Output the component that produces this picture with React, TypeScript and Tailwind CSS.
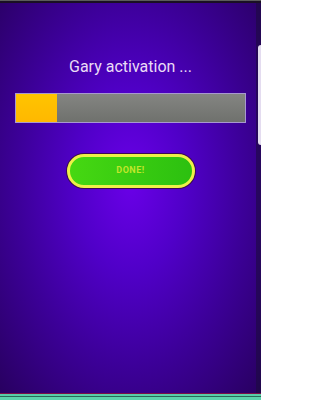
import React from 'react';

const App = () => {
  const progress = 41; // px of 229 inner width

  return (
    <div className="w-[261px] h-[400px] flex flex-col bg-[#12081c] overflow-hidden relative font-['Roboto',sans-serif]">
      {/* top status edge */}
      <div className="h-[1px] bg-[#5c5c5c]" />
      <div className="h-[2px] bg-[#1a1024]" />

      {/* main screen */}
      <div className="flex-1 flex flex-col items-center bg-[radial-gradient(ellipse_at_50%_46%,#6a00e8_0%,#5000c8_30%,#3c0098_62%,#280060_100%)]">
        <p className="mt-[53px] h-[22px] leading-[22px] text-[16px] text-[#eadcf6]">Gary activation ...</p>

        {/* progress bar */}
        <div className="mt-[15px] w-[231px] h-[30px] flex border border-[#a898d0] bg-[linear-gradient(#848582,#6f716d)]">
          <div
            className="h-full bg-[linear-gradient(#ffc400,#ffb800)]"
            style={{ width: progress }}
          />
        </div>

        {/* done button */}
        <div className="mt-[30px] rounded-full p-[1px] bg-[#3a0a50]">
          <button className="w-[128px] h-[34px] rounded-full border-[3px] border-[#eef048] bg-[linear-gradient(90deg,#46d812,#2cc010)] flex items-center justify-center">
            <span className="text-[9px] font-bold text-[#c2e62c] tracking-[0.5px]">DONE!</span>
          </button>
        </div>
      </div>

      {/* bottom edge */}
      <div className="h-[1px] bg-[#7a1048]" />
      <div className="h-[2px] bg-[#58d0a8]" />
      <div className="h-[1px] bg-[#2a6a58]" />
      <div className="h-[3px] bg-[#5cd4ac]" />

      {/* device edge panel on right */}
      <div className="absolute right-0 top-[3px] bottom-[7px] w-[5px] bg-[#1c0a40]/60" />
      <div className="absolute right-0 top-[45px] w-[3px] h-[100px] rounded-l-[3px] bg-[#e4dcf0]" />
    </div>
  );
};

export default App;
